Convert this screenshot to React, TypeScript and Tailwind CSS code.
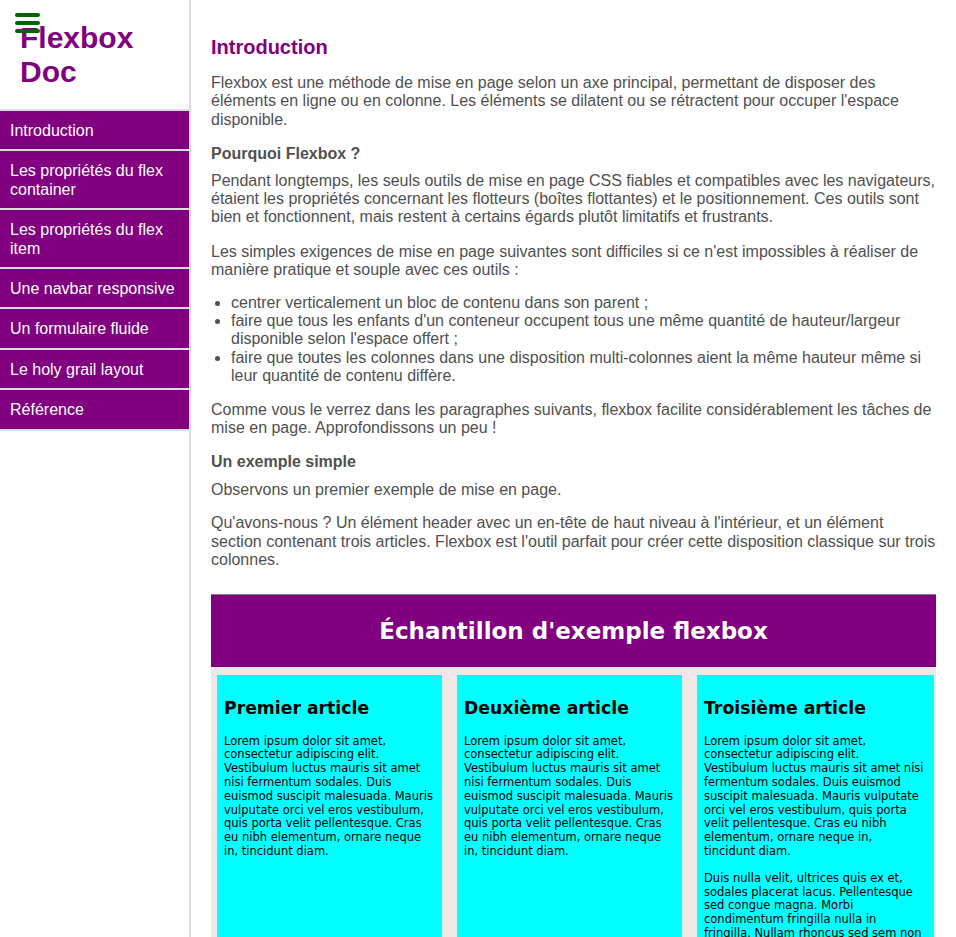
import React from "react";

const navItems = [
  "Introduction",
  "Les propriétés du flex container",
  "Les propriétés du flex item",
  "Une navbar responsive",
  "Un formulaire fluide",
  "Le holy grail layout",
  "Référence",
];

const lorem =
  "Lorem ipsum dolor sit amet, consectetur adipiscing elit. Vestibulum luctus mauris sit amet nisi fermentum sodales. Duis euismod suscipit malesuada. Mauris vulputate orci vel eros vestibulum, quis porta velit pellentesque. Cras eu nibh elementum, ornare neque in, tincidunt diam.";

const extra = [
  "Duis nulla velit, ultrices quis ex et, sodales placerat lacus. Pellentesque sed congue magna. Morbi condimentum fringilla nulla in fringilla. Nullam rhoncus sed sem non cursus. Donec tempor diam velit, in tincidunt nisi facilisis ac.",
  "Cras pretium, augue eget hendrerit tempor, quam nisl ullamcorper elit, at feugiat ligula nibh at tellus. Nullam pulvinar ex a neque facilisis, et fermentum mauris mollis.",
];

function Article({ title, paras, className }: { title: string; paras: string[]; className: string }) {
  return (
    <article className={"bg-[#00ffff] pl-[7px] pt-[23px] pb-[20px] text-black " + className}>
      <h2 className="text-[17.25px] leading-[20px] font-bold">{title}</h2>
      {paras.map((p, i) => (
        <p key={i} className={(i === 0 ? "mt-[17px]" : "mt-[13px]") + " text-[11.5px] leading-[13.8px]"}>
          {p}
        </p>
      ))}
    </article>
  );
}

export default function App() {
  return (
    <div className="flex min-h-screen bg-white" style={{ fontFamily: '"Liberation Sans", Arial, sans-serif' }}>
      <aside className="w-[191px] shrink-0 border-r-2 border-[#dddddd]">
        <div className="relative h-[111px] border-b-2 border-[#dddddd] pl-[20px] pt-[21px]">
          <div className="absolute left-[15px] top-[13px] flex flex-col gap-[4px]">
            <span className="block h-[4px] w-[25px] rounded-full bg-[#006400]" />
            <span className="block h-[4px] w-[25px] rounded-full bg-[#006400]" />
            <span className="block h-[4px] w-[25px] rounded-full bg-[#006400]" />
          </div>
          <h1 className="text-[30px] leading-[34px] font-bold text-[#800080]">
            Flexbox
            <br />
            Doc
          </h1>
        </div>
        <nav>
          {navItems.map((item) => (
            <div
              key={item}
              className="border-b-2 border-[#dddddd] bg-[#800080] px-[10px] pt-[11px] pb-[9px] text-[16px] leading-[18.4px] text-white"
            >
              {item}
            </div>
          ))}
        </nav>
      </aside>

      <main className="flex-1 pl-[20px] pr-[18px] pt-[36px] text-[16px] leading-[18.4px] text-[#505050]">
        <h2 className="text-[20px] leading-[23px] font-bold text-[#800080]">Introduction</h2>
        <p className="mt-[15px]">
          Flexbox est une méthode de mise en page selon un axe principal, permettant de disposer des éléments en ligne ou en colonne. Les éléments se dilatent ou se rétractent pour occuper l'espace disponible.
        </p>
        <h3 className="mt-[16px] font-bold">Pourquoi Flexbox ?</h3>
        <p className="mt-[8px]">
          Pendant longtemps, les seuls outils de mise en page CSS fiables et compatibles avec les navigateurs, étaient les propriétés concernant les flotteurs (boîtes flottantes) et le positionnement. Ces outils sont bien et fonctionnent, mais restent à certains égards plutôt limitatifs et frustrants.
        </p>
        <p className="mt-[16px]">
          Les simples exigences de mise en page suivantes sont difficiles si ce n'est impossibles à réaliser de manière pratique et souple avec ces outils :
        </p>
        <ul className="mt-[14px] list-disc pl-[20px]">
          <li>centrer verticalement un bloc de contenu dans son parent ;</li>
          <li>faire que tous les enfants d'un conteneur occupent tous une même quantité de hauteur/largeur disponible selon l'espace offert ;</li>
          <li>faire que toutes les colonnes dans une disposition multi-colonnes aient la même hauteur même si leur quantité de contenu diffère.</li>
        </ul>
        <p className="mt-[15px]">
          Comme vous le verrez dans les paragraphes suivants, flexbox facilite considérablement les tâches de mise en page. Approfondissons un peu !
        </p>
        <h3 className="mt-[15px] font-bold">Un exemple simple</h3>
        <p className="mt-[10px]">Observons un premier exemple de mise en page.</p>
        <p className="mt-[15px]">
          Qu'avons-nous ? Un élément header avec un en-tête de haut niveau à l'intérieur, et un élément section contenant trois articles. Flexbox est l'outil parfait pour créer cette disposition classique sur trois colonnes.
        </p>

        <div className="mt-[24px] mr-[2px] border-t border-[#808080]" style={{ fontFamily: '"DejaVu Sans", Verdana, sans-serif' }}>
          <header className="bg-[#800080] py-[23px] text-center">
            <h1 className="text-[23px] leading-[26px] font-bold text-white">Échantillon d'exemple flexbox</h1>
          </header>
          <section className="flex items-stretch gap-[15px] bg-[#ece9e8] pl-[6px] pr-[2px] pt-[8px]">
            <Article title="Premier article" paras={[lorem]} className="w-[225px] shrink-0 pr-[7px]" />
            <Article title="Deuxième article" paras={[lorem]} className="w-[225px] shrink-0 pr-[7px]" />
            <Article title="Troisième article" paras={[lorem, ...extra]} className="flex-1 pr-[10px]" />
          </section>
        </div>
      </main>
    </div>
  );
}
